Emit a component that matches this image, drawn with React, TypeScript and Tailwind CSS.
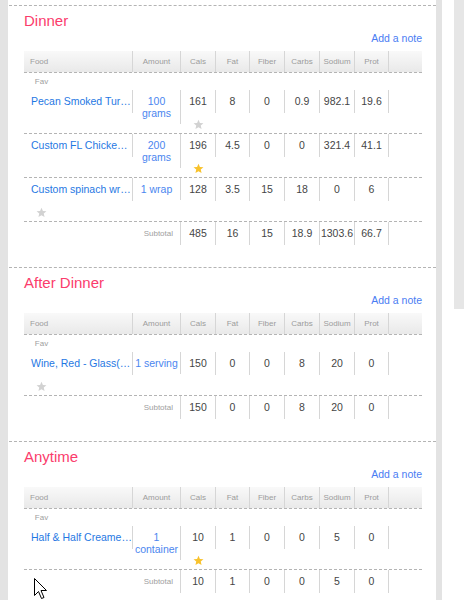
type Entry = {
    name: string;
    amount: string;
    vals: string[];
    fav: boolean;
};

type Meal = {
    title: string;
    entries: Entry[];
    subtotal: string[];
};

const meals: Meal[] = [
    {
        title: "Dinner",
        entries: [
            {
                name: "Pecan Smoked Turkey Breast",
                amount: "100 grams",
                vals: ["161", "8", "0", "0.9", "982.1", "19.6"],
                fav: false,
            },
            {
                name: "Custom FL Chicken Breast",
                amount: "200 grams",
                vals: ["196", "4.5", "0", "0", "321.4", "41.1"],
                fav: true,
            },
            {
                name: "Custom spinach wrap, whole wheat",
                amount: "1 wrap",
                vals: ["128", "3.5", "15", "18", "0", "6"],
                fav: false,
            },
        ],
        subtotal: ["485", "16", "15", "18.9", "1303.6", "66.7"],
    },
    {
        title: "After Dinner",
        entries: [
            {
                name: "Wine, Red - Glass(5 oz)",
                amount: "1 serving",
                vals: ["150", "0", "0", "8", "20", "0"],
                fav: false,
            },
        ],
        subtotal: ["150", "0", "0", "8", "20", "0"],
    },
    {
        title: "Anytime",
        entries: [
            {
                name: "Half & Half Creamer Cups",
                amount: "1 container",
                vals: ["10", "1", "0", "0", "5", "0"],
                fav: true,
            },
        ],
        subtotal: ["10", "1", "0", "0", "5", "0"],
    },
];

// widths of Cals, Fat, Fiber, Carbs, Sodium, Prot (border included)
const numWidths = ["w-[35px]", "w-[34px]", "w-[35px]", "w-[35px]", "w-[35px]", "w-[34px]"];
const numLabels = ["Cals", "Fat", "Fiber", "Carbs", "Sodium", "Prot"];

const Star: React.FC<{ on: boolean }> = ({ on }) => (
    <svg width="11" height="11" viewBox="0 0 24 24">
        <polygon
            points="12,1.5 15.1,8.6 22.8,9.2 16.9,14.2 18.7,21.8 12,17.8 5.3,21.8 7.1,14.2 1.2,9.2 8.9,8.6"
            fill={on ? "#f8c22c" : "#d2d2d2"}
        />
    </svg>
);

const NumCells: React.FC<{ vals: string[] }> = ({ vals }) => (
    <>
        {vals.map((v, i) => (
            <div
                key={i}
                className={`float-left ${numWidths[i]} border-r border-[#d6d6d6] py-[6px] text-center leading-[11px] text-[#454545]`}
            >
                {v}
            </div>
        ))}
    </>
);

const Row: React.FC<{ entry: Entry; first: boolean }> = ({ entry, first }) => (
    <div
        className={`flow-root text-[10.5px] ${
            first ? "" : "border-t border-dashed border-[#b4b4b4]"
        }`}
    >
        <div className="float-left w-[109px] overflow-hidden text-ellipsis whitespace-nowrap border-r border-[#d6d6d6] py-[6px] pl-[7px] leading-[11px] text-[#1f78e3]">
            {entry.name}
        </div>
        <div className="float-left w-[48px] border-r border-[#d6d6d6] py-[5px] text-center leading-[12px] text-[#4b86ef]">
            {entry.amount}
        </div>
        <NumCells vals={entry.vals} />
        <div className="float-left flex h-[20px] w-[35px] justify-center pt-[6px]">
            <Star on={entry.fav} />
        </div>
    </div>
);

const MealSection: React.FC<{ meal: Meal }> = ({ meal }) => (
    <section className="border-t border-dashed border-[#b4b4b4] pb-[22px] pl-[15px] pr-[14px] pt-[5px]">
        <h2 className="text-[15px] leading-[20px] text-[#fb3c6c]">{meal.title}</h2>
        <div className="text-right text-[10.5px] leading-[14px] text-[#4a7cf3]">Add a note</div>
        <div className="mt-[6px] flex h-[22px] border-b border-dashed border-[#b4b4b4] bg-linear-to-b from-[#f9f9f9] to-[#e9e9e9] text-[8px] text-[#9c9c9c]">
            <div className="flex w-[109px] items-center border-r border-[#d6d6d6] pl-[6px]">Food</div>
            <div className="flex w-[48px] items-center justify-center border-r border-[#d6d6d6]">Amount</div>
            {numLabels.map((l, i) => (
                <div
                    key={l}
                    className={`flex ${numWidths[i]} items-center justify-center border-r border-[#d6d6d6]`}
                >
                    {l}
                </div>
            ))}
            <div className="flex-1" />
        </div>
        <div className="h-[17px] w-[35px] pt-[4px] text-center text-[8px] leading-[10px] text-[#a0a0a0]">Fav</div>
        {meal.entries.map((e, i) => (
            <Row key={i} entry={e} first={i === 0} />
        ))}
        <div className="flow-root border-t border-dashed border-[#b4b4b4] text-[10.5px]">
            <div className="float-left w-[157px] border-r border-[#d6d6d6] py-[6px] pr-[7px] text-right text-[8px] leading-[11px] text-[#a0a0a0]">
                Subtotal
            </div>
            <NumCells vals={meal.subtotal} />
        </div>
    </section>
);

export default function App() {
    return (
        <div className="relative flex h-[600px] w-[464px] overflow-hidden bg-white font-['Liberation_Sans',Arial,sans-serif]">
            <div className="w-[8px] shrink-0 bg-[#e3e3e3]" />
            <div className="w-[428px] shrink-0 pl-[1px] pt-[5px]">
                {meals.map((m) => (
                    <MealSection key={m.title} meal={m} />
                ))}
            </div>
            <div className="w-[6px] shrink-0 bg-[#e3e3e3]" />
            <div className="w-[12px] shrink-0" />
            <div className="w-[10px] shrink-0">
                <div className="h-[309px] bg-[#e6e6e6]" />
            </div>
            <svg
                className="absolute left-[34px] top-[578px]"
                width="14"
                height="22"
                viewBox="0 0 14 22"
            >
                <path
                    d="M0.5 0.5 L0.5 17.5 L4.5 13.5 L7.5 20.5 L10 19.5 L7 12.5 L12.5 12.5 Z"
                    fill="#ffffff"
                    stroke="#000000"
                    strokeWidth="1"
                />
            </svg>
        </div>
    );
}
